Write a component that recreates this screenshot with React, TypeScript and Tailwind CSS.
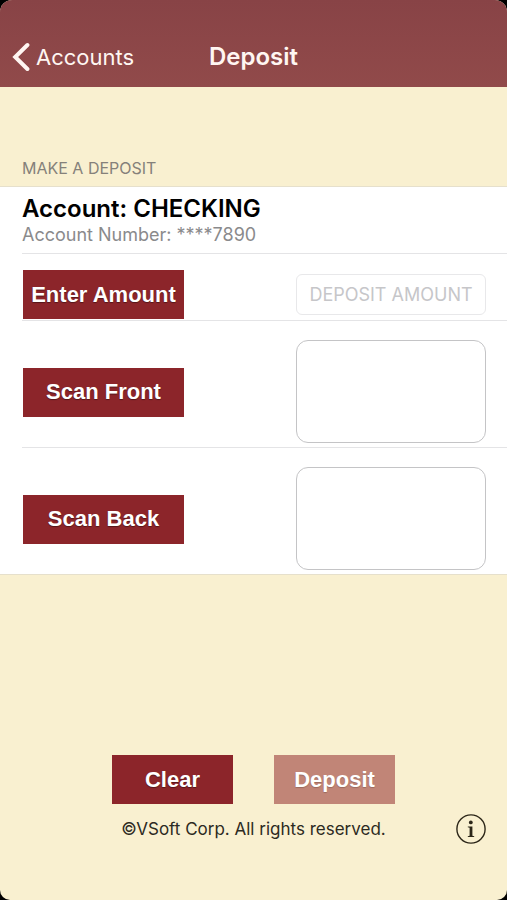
import type { ReactNode } from "react";

const actionClass =
  "flex items-center justify-center bg-[#8c252a] font-['Liberation_Sans',Arial,sans-serif] text-[22px] leading-6 font-bold text-white [text-shadow:0_1px_1px_rgba(0,0,0,0.4)]";

function Row({ children, last = false }: { children: ReactNode; last?: boolean }) {
  return (
    <li className="pl-[22px]">
      <div
        className={
          last
            ? "flex items-center justify-between pr-[21px]"
            : "flex items-center justify-between border-b border-[#e4e4e6] pr-[21px]"
        }
      >
        {children}
      </div>
    </li>
  );
}

function ScanRow({ label, last = false }: { label: string; last?: boolean }) {
  return (
    <Row last={last}>
      <button type="button" className={`${actionClass} mt-4 ml-px h-[49px] w-[161px]`}>
        {label}
      </button>
      <div className="mt-[19px] mb-1 h-[103px] w-[190px] rounded-xl border border-[#c4c4c6]" />
    </Row>
  );
}

export default function App() {
  return (
    <div className="min-h-screen bg-black font-['Inter','Liberation_Sans',sans-serif]">
      <div className="flex min-h-screen flex-col overflow-hidden rounded-t-xl rounded-b-[10px] bg-[#f9f0d0]">
        <header className="grid h-[87px] grid-cols-[1fr_auto_1fr] items-end bg-linear-to-b from-[#884346] to-[#914a4a] pb-3.5 text-[#fff6f2]">
          <button type="button" className="flex items-center gap-1.5 pl-3 text-[22px] leading-8">
            <svg width="18" height="30" viewBox="0 0 18 30" fill="none" aria-hidden="true">
              <path
                d="M15.4 3 3.2 15 15.4 27"
                stroke="currentColor"
                strokeWidth="4"
                strokeLinecap="round"
              />
            </svg>
            Accounts
          </button>
          <h1 className="text-2xl leading-8 font-semibold">Deposit</h1>
        </header>

        <main className="flex grow flex-col">
          <h2 className="mt-[71px] mb-2 pl-[22px] text-base leading-5 text-[#85817a]">
            MAKE A DEPOSIT
          </h2>
          <ul className="border-y border-[#e6e0cc] bg-white">
            <Row>
              <div className="pt-2 pb-1.5">
                <p className="text-2xl leading-7 font-semibold text-black">Account: CHECKING</p>
                <p className="text-lg leading-6 text-[#8a8a8c]">Account Number: ****7890</p>
              </div>
            </Row>
            <Row>
              <button type="button" className={`${actionClass} mt-4 mb-px ml-px h-[49px] w-[161px]`}>
                Enter Amount
              </button>
              <input
                type="text"
                aria-label="Deposit amount"
                placeholder="DEPOSIT AMOUNT"
                className="mt-5 mb-[5px] h-[41px] w-[190px] rounded-md border border-[#e8e8ea] bg-white text-center text-lg text-black placeholder:text-[#c6c6c9]"
              />
            </Row>
            <ScanRow label="Scan Front" />
            <ScanRow label="Scan Back" last />
          </ul>

          <footer className="mt-auto pb-14">
            <div className="flex justify-center gap-[41px]">
              <button type="button" className={`${actionClass} h-[49px] w-[121px]`}>
                Clear
              </button>
              <button
                type="button"
                disabled
                className="flex h-[49px] w-[121px] items-center justify-center bg-[#c18577] font-['Liberation_Sans',Arial,sans-serif] text-[22px] leading-6 font-bold text-white [text-shadow:0_1px_1px_rgba(0,0,0,0.2)]"
              >
                Deposit
              </button>
            </div>
            <div className="mt-2.5 grid grid-cols-[1fr_auto_1fr] items-center pr-[21px]">
              <small className="col-start-2 pl-[21px] text-[17px] leading-6 text-[#2c2a22]">
                ©VSoft Corp. All rights reserved.
              </small>
              <button type="button" aria-label="Information" className="justify-self-end">
                <svg width="30" height="30" viewBox="0 0 30 30" aria-hidden="true">
                  <circle cx="15" cy="15" r="14.1" fill="none" stroke="#2c2618" strokeWidth="1.4" />
                  <circle cx="14.8" cy="8.4" r="1.9" fill="#2c2618" />
                  <path
                    d="M11.8 12.4h4.6v9.3l1.8.5v.9h-6.4v-.9l1.8-.5v-7.9l-1.8-.5z"
                    fill="#2c2618"
                  />
                </svg>
              </button>
            </div>
          </footer>
        </main>
      </div>
    </div>
  );
}
